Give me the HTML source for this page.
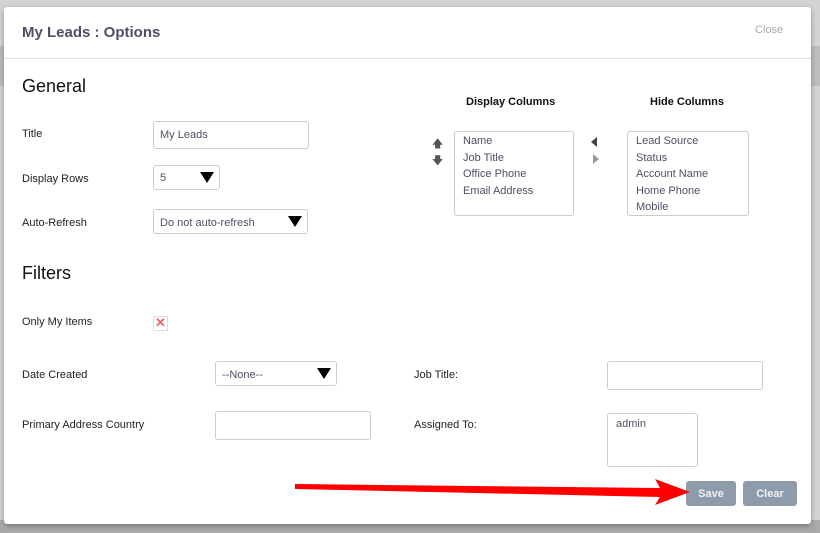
<!DOCTYPE html>
<html><head><style>
body{margin:0;width:820px;height:533px;background:#d4d4d4;font-family:"Liberation Sans",sans-serif;position:relative;overflow:hidden}
.bgstripe{position:absolute;left:0;width:820px;background:#bdbdbd}
.modal{position:absolute;left:4px;top:7px;width:807px;height:517px;background:#fff;border-radius:3px;box-shadow:0 2px 6px rgba(0,0,0,.3)}
.a{position:absolute;white-space:nowrap}
.lbl{font-size:11px;color:#222}
.in{position:absolute;border:1px solid #ccc;border-radius:3px;background:#fff;box-sizing:border-box;font-size:11px;color:#534d64;padding-left:6px}
.tri{position:absolute;width:0;height:0;border-left:7px solid transparent;border-right:7px solid transparent;border-top:11px solid #000}
.btn{position:absolute;background:#8d9bab;color:#f0f2f5;font-size:11px;font-weight:bold;text-align:center;border-radius:3px}
.list div{font-size:11px;color:#534d64;line-height:16.5px}
</style></head><body>
<div class="bgstripe" style="top:46px;height:40px"></div>
<div class="bgstripe" style="top:520px;height:13px;background:#aaa"></div>
<div class="modal">
<div class="a" style="left:18px;top:17px;font-size:15px;font-weight:bold;color:#534d64">My Leads : Options</div>
<div class="a" style="left:751px;top:17px;font-size:11px;color:#aaa">Close</div>
<div style="position:absolute;left:0;top:51px;width:807px;height:1px;background:#ddd"></div>
<div class="a" style="left:18px;top:69px;font-size:18px;color:#111">General</div>
<div class="a lbl" style="left:18px;top:121px">Title</div>
<div class="in" style="left:149px;top:114px;width:156px;height:28px;line-height:27px">My Leads</div>
<div class="a lbl" style="left:18px;top:166px">Display Rows</div>
<div class="in" style="left:149px;top:158px;width:67px;height:25px;line-height:25px">5</div><div class="tri" style="left:196px;top:165px"></div>
<div class="a lbl" style="left:18px;top:210px">Auto-Refresh</div>
<div class="in" style="left:149px;top:202px;width:155px;height:25px;line-height:26px">Do not auto-refresh</div><div class="tri" style="left:284px;top:209px"></div>
<div class="a" style="left:462px;top:89px;font-size:11px;font-weight:bold;color:#111">Display Columns</div>
<div class="a" style="left:646px;top:89px;font-size:11px;font-weight:bold;color:#111">Hide Columns</div>
<div class="a" style="left:428px;top:128px;font-size:11px;color:#555">&#129093;</div>
<div class="a" style="left:428px;top:145px;font-size:11px;color:#555">&#129095;</div>
<div class="a" style="left:587px;top:130px;width:0;height:0;border-top:5px solid transparent;border-bottom:5px solid transparent;border-right:6px solid #444"></div>
<div class="a" style="left:589px;top:147px;width:0;height:0;border-top:5px solid transparent;border-bottom:5px solid transparent;border-left:6px solid #999"></div>
<div class="in list" style="left:450px;top:124px;width:120px;height:85px;padding:1px 8px"><div>Name</div><div>Job Title</div><div>Office Phone</div><div>Email Address</div></div>
<div class="in list" style="left:623px;top:124px;width:122px;height:85px;padding:1px 8px"><div>Lead Source</div><div>Status</div><div>Account Name</div><div>Home Phone</div><div>Mobile</div></div>
<div class="a" style="left:18px;top:256px;font-size:18px;color:#111">Filters</div>
<div class="a lbl" style="left:18px;top:309px">Only My Items</div>
<div class="a" style="left:149px;top:309px;width:13px;height:13px;border:1px solid #ddd;color:#e86a6a;font-size:13px;line-height:12px;text-align:center;font-weight:bold">✕</div>
<div class="a lbl" style="left:18px;top:362px">Date Created</div>
<div class="in" style="left:211px;top:354px;width:122px;height:25px;line-height:26px">--None--</div><div class="tri" style="left:313px;top:361px"></div>
<div class="a lbl" style="left:410px;top:362px">Job Title:</div>
<div class="in" style="left:603px;top:354px;width:156px;height:29px"></div>
<div class="a lbl" style="left:18px;top:412px">Primary Address Country</div>
<div class="in" style="left:211px;top:404px;width:156px;height:29px"></div>
<div class="a lbl" style="left:410px;top:412px">Assigned To:</div>
<div class="in" style="left:603px;top:406px;width:91px;height:54px;padding-top:4px;padding-left:8px">admin</div>
<div class="btn" style="left:682px;top:474px;width:50px;height:25px;line-height:27px">Save</div>
<div class="btn" style="left:739px;top:474px;width:54px;height:25px;line-height:27px">Clear</div>
</div>
<svg style="position:absolute;left:0;top:0" width="820" height="533"><polygon points="295,484 660,488 655,479 690,492 655,505 660,497 295,489" fill="#f00"/></svg>
</body></html>
